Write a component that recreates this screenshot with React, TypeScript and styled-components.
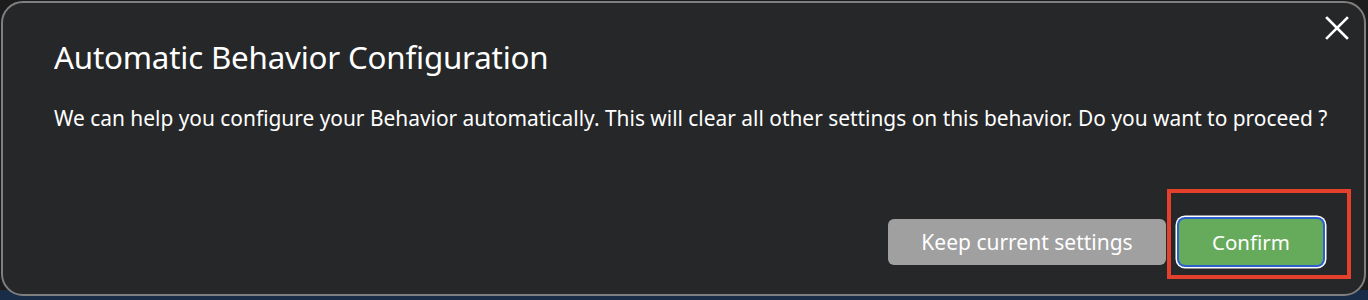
import React from 'react'
import styled, { createGlobalStyle } from 'styled-components'

const GlobalStyle = createGlobalStyle`
  html, body {
    margin: 0;
    padding: 0;
    background: #1c1c1d;
    width: 1368px;
    height: 300px;
    overflow: hidden;
  }
  * {
    box-sizing: border-box;
  }
`

const Page = styled.div`
  width: 1368px;
  height: 300px;
  padding: 1px 2px 4px 1px;
  background: linear-gradient(to bottom, #1c1c1d 0, #1c1c1d 290px, #1a2d48 290px);
  font-family: 'Noto Sans', 'Open Sans', sans-serif;
`

const Dialog = styled.div`
  position: relative;
  display: flex;
  flex-direction: column;
  height: 295px;
  background: #262729;
  border: 2px solid #7f7f7f;
  border-radius: 22px;
  padding: 32px 41px 29px 51px;
`

const CloseButton = styled.button`
  position: absolute;
  top: 11px;
  right: 13px;
  width: 28px;
  height: 28px;
  padding: 0;
  border: none;
  background: transparent;
  display: flex;
  align-items: center;
  justify-content: center;
  cursor: pointer;
`

const Title = styled.h2`
  margin: 0;
  color: #ffffff;
  font-size: 31.3px;
  font-weight: 400;
  line-height: 44px;
  letter-spacing: -0.2px;
`

const Message = styled.p`
  margin: 25px 0 0;
  color: #ffffff;
  font-size: 20.9px;
  line-height: 28px;
  white-space: nowrap;
`

const Footer = styled.div`
  margin-top: auto;
  display: flex;
  justify-content: flex-end;
  align-items: center;
  gap: 13px;
`

const ActionButton = styled.button<{ $variant: 'secondary' | 'primary' }>`
  height: 46px;
  border: none;
  border-radius: 6px;
  font-family: inherit;
  font-size: ${({ $variant }) => ($variant === 'primary' ? '20.5px' : '21px')};
  color: #ffffff;
  cursor: pointer;
  padding: 0 20px;
  min-width: ${({ $variant }) => ($variant === 'primary' ? '144px' : '278px')};
  background: ${({ $variant }) => ($variant === 'primary' ? '#66ab5c' : '#a0a0a0')};
  box-shadow: ${({ $variant }) =>
    $variant === 'primary' ? '0 0 0 2px #2d5fcf, 0 0 0 3.5px #ffffff' : 'none'};
`

const Highlighted = styled.div`
  position: relative;
  display: flex;
`

const HighlightBox = styled.div`
  position: absolute;
  left: -12px;
  top: -30px;
  right: -28px;
  bottom: -14px;
  border: 4px solid #e4402c;
  pointer-events: none;
`

const CloseIcon = () => (
  <svg width="24" height="24" viewBox="0 0 24 24">
    <path d="M2 2 L22 22 M22 2 L2 22" stroke="#ffffff" strokeWidth="2.6" strokeLinecap="square" />
  </svg>
)

export default function App() {
  return (
    <>
      <GlobalStyle />
      <Page>
        <Dialog>
          <CloseButton aria-label="Close">
            <CloseIcon />
          </CloseButton>
          <Title>Automatic Behavior Configuration</Title>
          <Message>
            We can help you configure your Behavior automatically. This will clear all other settings on this
            behavior. Do you want to proceed ?
          </Message>
          <Footer>
            <ActionButton $variant="secondary">Keep current settings</ActionButton>
            <Highlighted>
              <ActionButton $variant="primary">Confirm</ActionButton>
              <HighlightBox />
            </Highlighted>
          </Footer>
        </Dialog>
      </Page>
    </>
  )
}
